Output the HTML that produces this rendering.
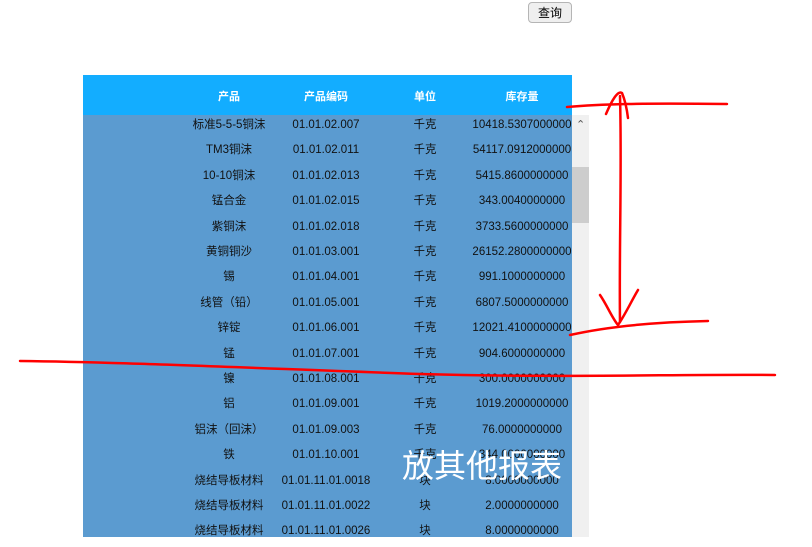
<!DOCTYPE html>
<html><head><meta charset="utf-8"><style>
body{margin:0;width:812px;height:537px;overflow:hidden;background:#fff;position:relative;font-family:"Liberation Sans","Noto Sans CJK SC",sans-serif}
.btn{position:absolute;left:528px;top:2px;width:44px;height:21px;border:1px solid #b5b5b5;border-radius:4px;background:#efefef;font-size:12px;line-height:20px;text-align:center;box-sizing:border-box;color:#000}
.hd{position:absolute;left:83px;top:75px;width:489px;height:40px;background:#13adff;color:#fff;font-size:11px;font-weight:bold}
.bd{position:absolute;left:83px;top:115px;width:489px;height:422px;background:#5b9bd0}
.sb{position:absolute;left:572px;top:115px;width:17px;height:422px;background:#f0f0f0}
.th{position:absolute;left:572px;top:167px;width:17px;height:56px;background:#cdcdcd}
.c{position:absolute;transform:translateX(-50%);white-space:nowrap}
.r{position:absolute;left:0;width:489px;height:25px;font-size:11.5px;color:#111;line-height:18px}
.big{position:absolute;left:402px;top:444px;color:#fff;font-size:32px;font-family:"Noto Sans CJK SC",sans-serif;line-height:40px}
</style></head><body>
<div class="btn">查询</div>
<div class="hd"><span class="c" style="left:146px;top:13px">产品</span><span class="c" style="left:243px;top:13px">产品编码</span><span class="c" style="left:342px;top:13px">单位</span><span class="c" style="left:439px;top:13px">库存量</span></div>
<div class="bd" id="bd"></div>
<div class="sb"></div><div class="th"></div>
<div style="position:absolute;left:576px;top:118px;font-size:11px;color:#555">&#8963;</div>
<div class="big">放其他报表</div>
<svg style="position:absolute;left:0;top:0" width="812" height="537">
<g fill="none" stroke="#f00" stroke-width="2.5" stroke-linecap="round">
<path d="M20 361 C120 362 250 368 420 374 C560 378 680 374 775 375"/>
<path d="M567 107 C600 104 640 103 727 104"/>
<path d="M620 322 C619 250 622 170 620 96 M606 114 C612 100 618 90 622 93 C625 100 627 110 628 118"/>
<path d="M570 335 C610 326 660 322 708 321"/>
<path d="M600 295 C607 305 612 318 618 325 C625 315 632 300 638 290"/>
</g></svg>
<script>
var d=[["标准5-5-5铜沫","01.01.02.007","千克","10418.5307000000"],["TM3铜沫","01.01.02.011","千克","54117.0912000000"],["10-10铜沫","01.01.02.013","千克","5415.8600000000"],["锰合金","01.01.02.015","千克","343.0040000000"],["紫铜沫","01.01.02.018","千克","3733.5600000000"],["黄铜铜沙","01.01.03.001","千克","26152.2800000000"],["锡","01.01.04.001","千克","991.1000000000"],["线管（铅）","01.01.05.001","千克","6807.5000000000"],["锌锭","01.01.06.001","千克","12021.4100000000"],["锰","01.01.07.001","千克","904.6000000000"],["镍","01.01.08.001","千克","300.0000000000"],["铝","01.01.09.001","千克","1019.2000000000"],["铝沫（回沫）","01.01.09.003","千克","76.0000000000"],["铁","01.01.10.001","千克","344.0000000000"],["烧结导板材料","01.01.11.01.0018","块","8.0000000000"],["烧结导板材料","01.01.11.01.0022","块","2.0000000000"],["烧结导板材料","01.01.11.01.0026","块","8.0000000000"]];
var h="",x=[146,243,342,439];
d.forEach(function(r,i){h+='<div class="r" style="top:'+(i*25.4+1)+'px">';r.forEach(function(t,j){h+='<span class="c" style="left:'+x[j]+'px;top:0">'+t+'</span>'});h+='</div>'});
document.getElementById('bd').innerHTML=h;
</script>
</body></html>
